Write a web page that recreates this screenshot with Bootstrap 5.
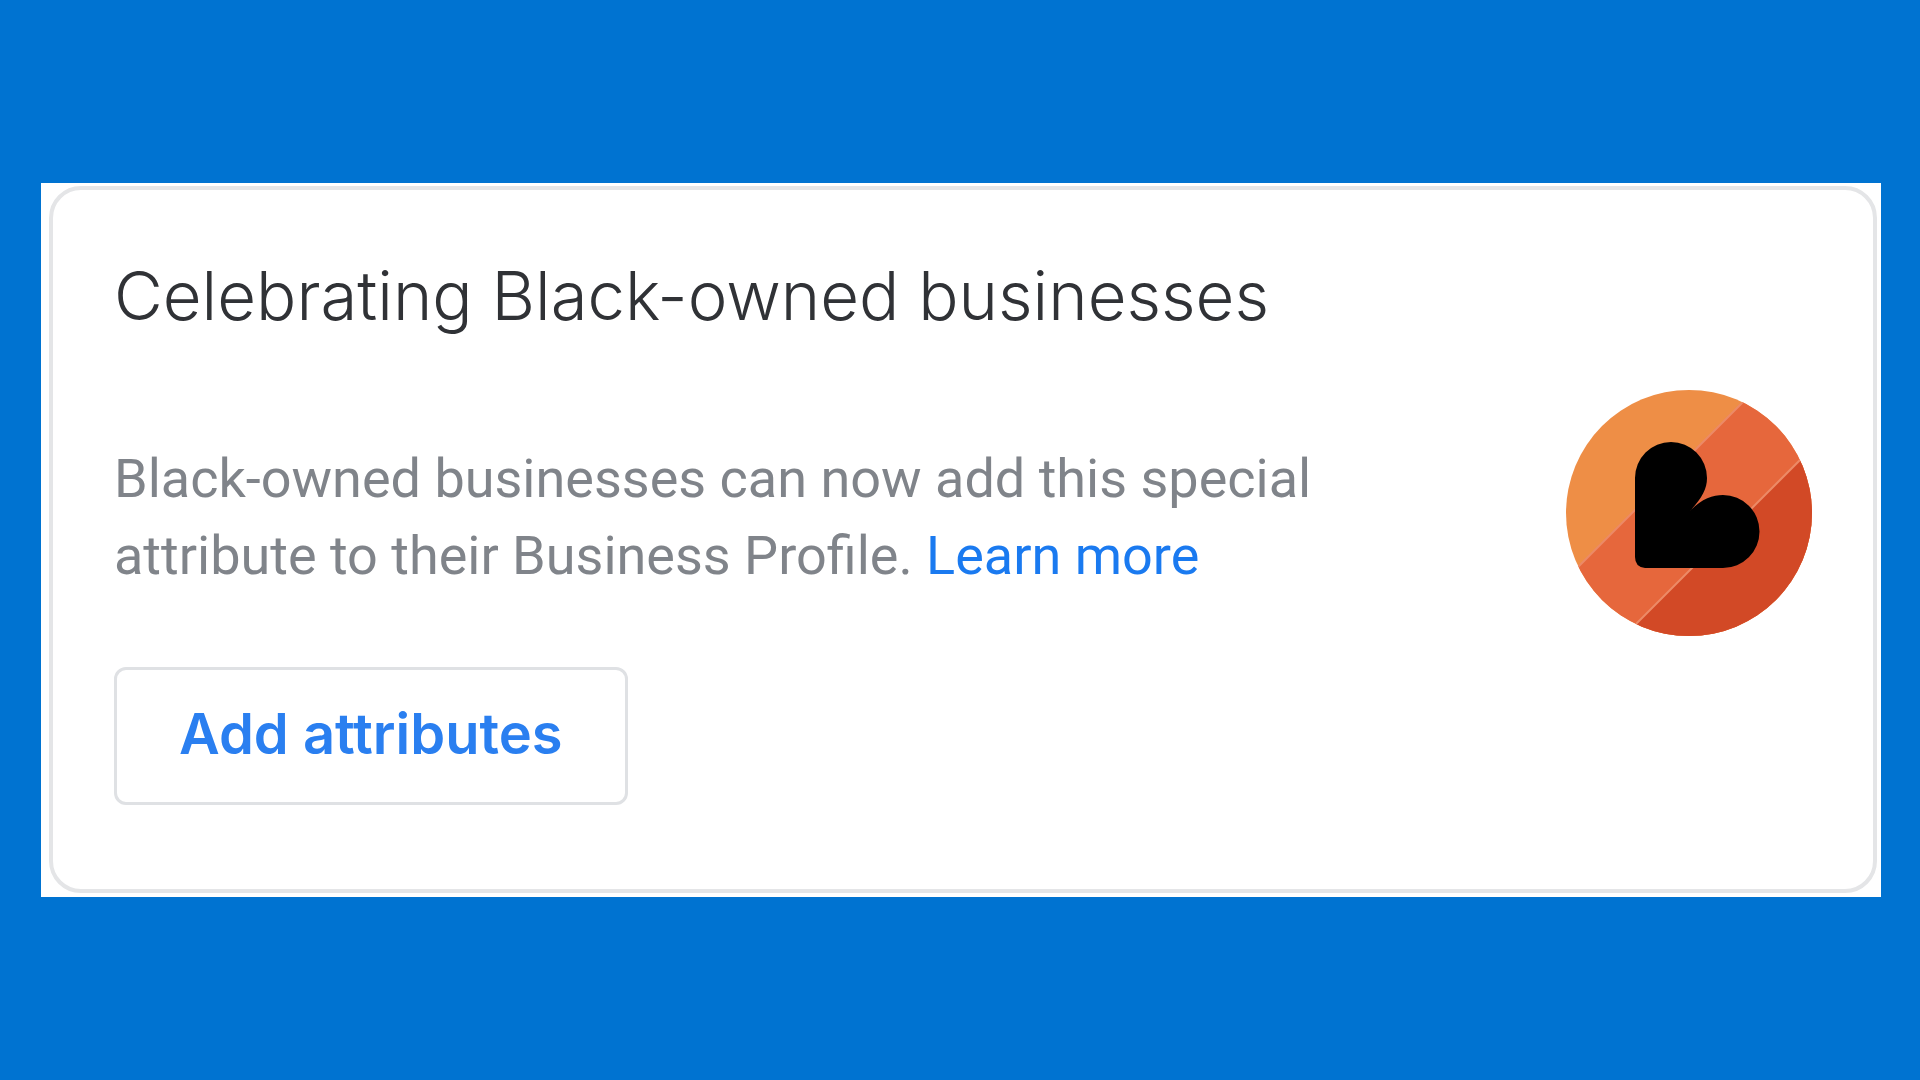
<!DOCTYPE html>
<html lang="en">
<head>
<meta charset="utf-8">
<meta name="viewport" content="width=device-width, initial-scale=1">
<title>Celebrating Black-owned businesses</title>
<link href="https://cdn.jsdelivr.net/npm/bootstrap@5.3.0/dist/css/bootstrap.min.css" rel="stylesheet">
<style>
  body { background: #0073d1; font-family: Roboto, sans-serif; }
  .stage { padding: 40px 39px 40px 41px; }
  .panel { padding: 3px 4px 4px 8px; }
  .promo { border: 4px solid #e4e5e7; border-radius: 32px; padding: 64px 61px 84px; }
  .promo-title { font-family: Inter, sans-serif; font-weight: 300; font-size: 67px; line-height: 84px; color: #303236; margin-bottom: 52px; }
  .promo-text { font-size: 54px; line-height: 77px; color: #80848a; max-width: 1240px; }
  .promo-text a { color: #1a7af0; }
  .promo-icon { width: 246px; height: 246px; }
  .btn-promo { font-family: Inter, sans-serif; font-weight: 600; font-size: 56px; line-height: 64px; color: #2a7ff0;
    border: 3px solid #dfe1e4; border-radius: 12px; padding: 32px 62px 36px; margin-top: 31px; }
  .btn-promo:hover { color: #1a6fe0; border-color: #c6cace; }
</style>
<script defer src="https://cdn.jsdelivr.net/npm/bootstrap@5.3.0/dist/js/bootstrap.bundle.min.js"></script>
</head>
<body>
<main class="stage min-vh-100 d-flex align-items-center">
  <div class="panel bg-white flex-grow-1">
    <section class="promo">
      <h1 class="promo-title">Celebrating Black-owned businesses</h1>
      <div class="d-flex align-items-center justify-content-between">
        <p class="promo-text mt-2 mb-0">Black-owned businesses can now add this special attribute to their Business Profile. <a href="#" class="text-decoration-none">Learn more</a></p>
        <svg class="promo-icon flex-shrink-0" viewBox="0 0 246 246" aria-hidden="true">
          <defs><clipPath id="disc"><circle cx="123" cy="123" r="123"/></clipPath></defs>
          <g clip-path="url(#disc)">
            <path fill="#ee8e46" d="M0 0H246V246H0z"/>
            <path fill="#e6673c" d="M189 0L-11 200V246H246V0z"/>
            <path fill="#d24926" d="M246 58L58 246H246z"/>
            <path fill="none" stroke="#ec8a66" stroke-width="2" d="M189 0L-11 200M246 58L58 246"/>
          </g>
          <path d="M69 88A36 36 0 0 1 141 88C141 99 136 108 124 121C135 109 147 105 157 105A36 36 0 0 1 157 178H79Q69 177 69 167Z"/>
        </svg>
      </div>
      <button type="button" class="btn btn-promo">Add attributes</button>
    </section>
  </div>
</main>
</body>
</html>
